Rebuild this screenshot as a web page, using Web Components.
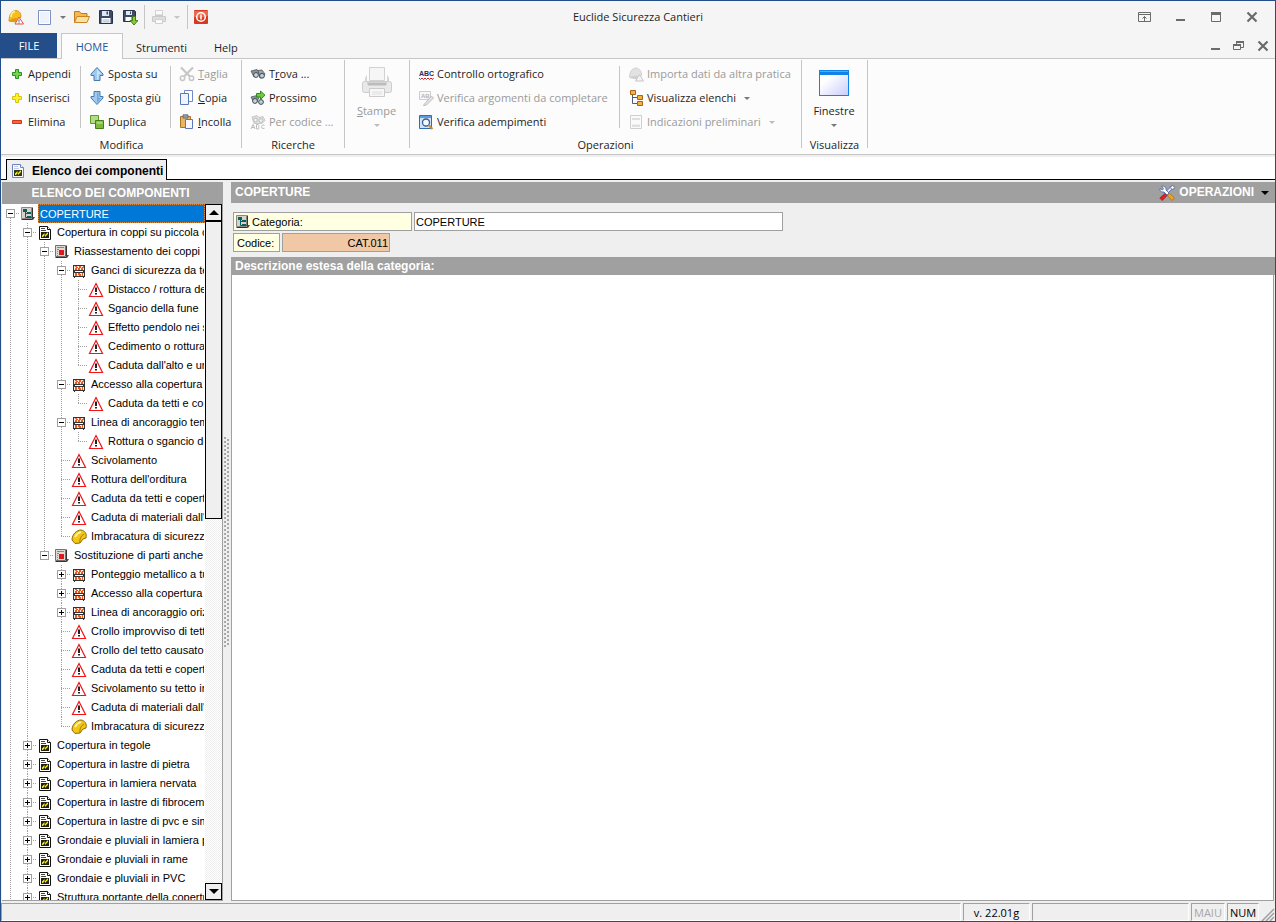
<!DOCTYPE html>
<html lang="it">
<head>
<meta charset="utf-8">
<title>Euclide Sicurezza Cantieri</title>
<style>
  html, body { margin: 0; height: 100%; }
  body { font: 11px/16px "Open Sans", "Noto Sans", sans-serif; color: #1e1e1e; background: #efefef; }
</style>
</head>
<body>
<ec-window>
  <ec-titlebar slot="title">Euclide Sicurezza Cantieri</ec-titlebar>
  <ec-tabbar slot="title"></ec-tabbar>
  <ec-ribbon slot="ribbon">
    <ec-group label="Modifica">
      <ec-column style="--w:80px">
        <ec-command icon="plus">Appendi</ec-command>
        <ec-command icon="plusy">Inserisci</ec-command>
        <ec-command icon="minus">Elimina</ec-command>
      </ec-column>
      <ec-column style="--w:90px">
        <ec-command icon="up">Sposta su</ec-command>
        <ec-command icon="down">Sposta giù</ec-command>
        <ec-command icon="dup">Duplica</ec-command>
      </ec-column>
      <ec-column style="--w:71px">
        <ec-command icon="cut" disabled><u>T</u>aglia</ec-command>
        <ec-command icon="copy"><u>C</u>opia</ec-command>
        <ec-command icon="paste"><u>I</u>ncolla</ec-command>
      </ec-column>
    </ec-group>
    <ec-group label="Ricerche">
      <ec-column style="--w:102px">
        <ec-command icon="find">T<u>r</u>ova ...</ec-command>
        <ec-command icon="next">Prossimo</ec-command>
        <ec-command icon="code" disabled>Per codice ...</ec-command>
      </ec-column>
    </ec-group>
    <ec-group label="">
      <ec-column style="--w:64px">
        <ec-command big arrow icon="printer" disabled><u>S</u>tampe</ec-command>
      </ec-column>
    </ec-group>
    <ec-group label="Operazioni">
      <ec-column style="--w:210px">
        <ec-command icon="abc">Controllo ortografico</ec-command>
        <ec-command icon="abedit" disabled>Verifica argomenti da completare</ec-command>
        <ec-command icon="check">Verifica adempimenti</ec-command>
      </ec-column>
      <ec-column style="--w:181px">
        <ec-command icon="helmetgray" disabled>Importa dati da altra pratica</ec-command>
        <ec-command icon="tree" arrow>Visualizza elenchi</ec-command>
        <ec-command icon="page" arrow disabled>Indicazioni preliminari</ec-command>
      </ec-column>
    </ec-group>
    <ec-group label="Visualizza">
      <ec-column style="--w:65px">
        <ec-command big arrow icon="window">Finestre</ec-command>
      </ec-column>
    </ec-group>
  </ec-ribbon>
  <ec-doctabs slot="tabs">Elenco dei componenti</ec-doctabs>

  <ec-tree slot="side" heading="ELENCO DEI COMPONENTI">
    <ec-node more selected open icon="cat" label="COPERTURE">
      <ec-node open icon="doc" label="Copertura in coppi su piccola o">
        <ec-node open icon="job" label="Riassestamento dei coppi">
          <ec-node open icon="barrier" label="Ganci di sicurezza da te">
            <ec-node icon="risk" label="Distacco / rottura de"></ec-node>
            <ec-node icon="risk" label="Sgancio della fune"></ec-node>
            <ec-node icon="risk" label="Effetto pendolo nei s"></ec-node>
            <ec-node icon="risk" label="Cedimento o rottura"></ec-node>
            <ec-node icon="risk" label="Caduta dall'alto e url"></ec-node>
          </ec-node>
          <ec-node open icon="barrier" label="Accesso alla copertura">
            <ec-node icon="risk" label="Caduta da tetti e cop"></ec-node>
          </ec-node>
          <ec-node open icon="barrier" label="Linea di ancoraggio tem">
            <ec-node icon="risk" label="Rottura o sgancio de"></ec-node>
          </ec-node>
          <ec-node icon="risk" label="Scivolamento"></ec-node>
          <ec-node icon="risk" label="Rottura dell'orditura"></ec-node>
          <ec-node icon="risk" label="Caduta da tetti e copert"></ec-node>
          <ec-node icon="risk" label="Caduta di materiali dall'a"></ec-node>
          <ec-node icon="helmet" label="Imbracatura di sicurezza"></ec-node>
        </ec-node>
        <ec-node open icon="job" label="Sostituzione di parti anche c">
          <ec-node closed icon="barrier" label="Ponteggio metallico a tu"></ec-node>
          <ec-node closed icon="barrier" label="Accesso alla copertura"></ec-node>
          <ec-node closed icon="barrier" label="Linea di ancoraggio oriz"></ec-node>
          <ec-node icon="risk" label="Crollo improvviso di tetti"></ec-node>
          <ec-node icon="risk" label="Crollo del tetto causato"></ec-node>
          <ec-node icon="risk" label="Caduta da tetti e copert"></ec-node>
          <ec-node icon="risk" label="Scivolamento su tetto in"></ec-node>
          <ec-node icon="risk" label="Caduta di materiali dall'a"></ec-node>
          <ec-node icon="helmet" label="Imbracatura di sicurezza"></ec-node>
        </ec-node>
      </ec-node>
      <ec-node closed icon="doc" label="Copertura in tegole"></ec-node>
      <ec-node closed icon="doc" label="Copertura in lastre di pietra"></ec-node>
      <ec-node closed icon="doc" label="Copertura in lamiera nervata"></ec-node>
      <ec-node closed icon="doc" label="Copertura in lastre di fibroceme"></ec-node>
      <ec-node closed icon="doc" label="Copertura in lastre di pvc e simi"></ec-node>
      <ec-node closed icon="doc" label="Grondaie e pluviali in lamiera pr"></ec-node>
      <ec-node closed icon="doc" label="Grondaie e pluviali in rame"></ec-node>
      <ec-node closed icon="doc" label="Grondaie e pluviali in PVC"></ec-node>
      <ec-node closed more icon="doc" label="Struttura portante della copertu"></ec-node>
    </ec-node>
  </ec-tree>
  <ec-detail slot="main" heading="COPERTURE"></ec-detail>
  <ec-status slot="status"></ec-status>
</ec-window>

<script>
const ICONS = {
  app: `<path d="M1 12C1 5 4 2 8 1.500C12 2 13 5 13 8L8 13Z" fill="#f6bf1c" stroke="#cf8a10" stroke-width=".8"/><path d="M3 8C3 5 5 3 7 2.500" stroke="#fff3a0" stroke-width="1.500" fill="none"/><path d="M1 12.500C4 9 7 9 9 9L8 13Z" fill="#e39a12"/><path d="M11 8L15.500 15H7Z" fill="#fff" stroke="#d9534a"/><path d="M11 10.500v2.300M11 13.500v1" stroke="#555"/>`,
  blank: `<path d="M1.500 1.500h12v14h-12z" fill="#fff" stroke="#7d90c4"/><path d="M3 3h9v11H3z" fill="#eef2fd"/>`,
  folder: `<path d="M.5 13.500v-11h5l1.500 2h6v3" fill="#f5b94e" stroke="#c27a1c"/><path d="M.5 13.500L3 7.500h12.500L13 13.500Z" fill="#fbe1a0" stroke="#c98425"/>`,
  save: `<path d="M1.500 1.500h12l1 1v12h-13z" fill="#3c4c66" stroke="#26334a"/><path d="M4 2h7v5H4z" fill="#dfe8f4"/><path d="M8.500 2.500h1.500v3H8.500z" fill="#3c4c66"/><path d="M3.500 9h9v5h-9z" fill="#fff"/><path d="M4.500 11h7M4.500 12.900h7" stroke="#9fb4d0"/>`,
  saveas: `<path d="M1.500 1.500h11l1 1v10h-12z" fill="#3c4c66" stroke="#26334a"/><path d="M4 2h6v4H4z" fill="#dfe8f4"/><path d="M8 2.500h1v2.500H8z" fill="#3c4c66"/><path d="M3.500 8h6v4h-6z" fill="#fff"/><path d="M10.500 7.500h3v4h2.500l-4 4.500-4-4.500h2.500z" fill="#8cc63e" stroke="#3f7a12" stroke-width=".9"/>`,
  print: `<path d="M4.500 1.500h7v6h-7z" fill="#fafafa" stroke="#d3d3d3"/><path d="M1.500 7.500h13v5h-13z" fill="#dedede" stroke="#cacaca"/><path d="M4 5.500h8v2.500H4z" fill="#cbcbcb"/><path d="M4.500 10.500h7v4h-7z" fill="#fbfbfb" stroke="#cfcfcf"/>`,
  power: `<rect x="0" y="1" width="14" height="14" rx="1" fill="#d9391e"/><path d="M0 2h14v5q-7 3-14 1z" fill="#ea6a4c"/><circle cx="7" cy="8" r="4.300" fill="none" stroke="#fff" stroke-width="1.500"/><path d="M7 5.500v5" stroke="#fff" stroke-width="1.500"/>`,
  plus: `<path d="M6.500 3.500h3v3h3v3h-3v3h-3v-3h-3v-3h3z" fill="#74d353" stroke="#27921c"/>`,
  plusy: `<path d="M6.500 3.500h3v3h3v3h-3v3h-3v-3h-3v-3h3z" fill="#fbf12c" stroke="#d8c40a"/>`,
  minus: `<path d="M3.500 6.500h9v3h-9z" fill="#f8653c" stroke="#d3341a"/>`,
  up: `<path d="M8 1.500L14 8v1.500h-3v5H5v-5H2V8Z" fill="#9fcaf0" stroke="#4a79ad"/><path d="M8 3L12 8H9.500v5.500H8z" fill="#c9e4fb"/>`,
  down: `<path d="M8 14.500L14 8V6.500h-3v-5H5v5H2V8Z" fill="#9fcaf0" stroke="#4a79ad"/><path d="M8 13L12 8H9.500V2.500H8z" fill="#6fa9dd"/>`,
  dup: `<path d="M1.500 1.500h8v8h-8z" fill="#b3dc86" stroke="#5c9a2c"/><path d="M6.500 6.500h8v8h-8z" fill="#7bb83c" stroke="#437f17"/><path d="M7.500 7.500h6v2.500h-6z" fill="#a7d66c"/>`,
  cut: `<path d="M2 1.500L11 10.500M14 1.500L5 10.500" stroke="#c6c6c6" stroke-width="2.200"/><circle cx="3.500" cy="12.300" r="2.200" fill="none" stroke="#c6c6c6" stroke-width="1.500"/><circle cx="12.500" cy="12.300" r="2.200" fill="none" stroke="#c6c6c6" stroke-width="1.500"/>`,
  copy: `<path d="M5.500 .5h8v11h-8z" fill="#fff" stroke="#6f8ac4"/><path d="M1.500 3.500h8v11h-8z" fill="#f0f4ff" stroke="#5c78b8"/>`,
  paste: `<path d="M1.500 2.500h10v11h-10z" fill="#e7b568" stroke="#a8742a"/><path d="M4 .8h5v3.200H4z" fill="#8f9fb5" stroke="#56657c" stroke-width=".8"/><path d="M6.500 5.500h7v9h-7z" fill="#f4f7ff" stroke="#5c78b8"/>`,
  find: `<path d="M1 5l6-1.500 2 2-2 4-3 1.500Z" fill="#8b9297" stroke="#4f565c" stroke-width=".8"/><path d="M8 4.500l4-.5 3 4-2 3.500-3 .5Z" fill="#9ca4aa" stroke="#4f565c" stroke-width=".8"/><circle cx="6" cy="9" r="2.400" fill="#c8d8e2" stroke="#40474d"/><circle cx="12" cy="9.800" r="2.400" fill="#b9d2e2" stroke="#40474d"/>`,
  next: `<path d="M1 7l6-1.500 2 2-2 4-3 1Z" fill="#8b9297" stroke="#4f565c" stroke-width=".8"/><circle cx="5" cy="11" r="2.400" fill="#c8d8e2" stroke="#40474d"/><circle cx="11" cy="12" r="2.400" fill="#b9d2e2" stroke="#40474d"/><path d="M6.500 3.500h4v-2.500l4.500 4.200-4.500 4.300V7h-4z" fill="#6ecb3f" stroke="#2a7d18" stroke-width=".9"/>`,
  code: `<path d="M2 3l5-1.500 2 2 4-1 2 4-3 3H4Z" fill="#dedede" stroke="#c9c9c9"/><circle cx="5.500" cy="6" r="1.800" fill="#f4f4f4" stroke="#bebebe"/><circle cx="11" cy="6.500" r="1.800" fill="#f4f4f4" stroke="#bebebe"/><path d="M1 15l2-4.500L5 15M1.800 13.500h2.600M6.500 10.500v4.500h2q1.200-1.100 0-2.300 1-1.100-.2-2.200zM14.500 11.200q-2.500-1.200-3 1.500 .2 2.800 3 1.600" stroke="#bdbdbd" fill="none"/>`,
  abc: `<text x="1" y="10" font-family="Liberation Sans" font-size="7" font-weight="700" fill="#25305f">ABC</text><path d="M1 12l1.500 1.500L4 12l1.500 1.500L7 12l1.500 1.500L10 12l1.500 1.500L13 12l1.500 1.500L15.500 12" stroke="#d0202a" fill="none"/>`,
  abedit: `<path d="M1.500 1.500h11v8h-11z" fill="#f7f7f7" stroke="#cecece"/><text x="3" y="8" font-family="Liberation Sans" font-size="6" font-weight="700" fill="#b5b5b5">AB</text><path d="M6 14.500L13.500 6l2 2-7 7-3 .5z" fill="#e3e3e3" stroke="#bdbdbd"/>`,
  check: `<path d="M1.500 1.500h12v13h-12z" fill="#cfe3fa" stroke="#2e6db4"/><path d="M2 2h11v2H2z" fill="#5e9be0"/><circle cx="8" cy="8.500" r="3.500" fill="#f2f9ff" stroke="#3c5d8f" stroke-width="1.300"/><path d="M10.500 11L14.500 15" stroke="#d08a2a" stroke-width="2"/>`,
  helmetgray: `<path d="M1.500 11C2 5 4 2.500 8 2c4 .5 5.500 4 5.500 7l-3 3z" fill="#e2e2e2" stroke="#d0d0d0"/><path d="M1 12q5-3 9-2l-1 3.500z" fill="#cfcfcf"/><path d="M11.500 8.500l4 6.500h-8z" fill="#f3f3f3" stroke="#c6c6c6"/>`,
  tree: `<path d="M4.500 5v8.500H9M4.500 7.500H9" stroke="#4e5c74" fill="none"/><g fill="#f5b042" stroke="#a6631a"><path d="M2.500 .5h5v4h-5zM9.500 5.500h5v4h-5zM9.500 11.500h5v4h-5z"/></g>`,
  page: `<path d="M2.500 1.500h11v13h-11z" fill="#fafafa" stroke="#cfcfcf"/><path d="M4 4h8v2H4zM4 10.500h8v2.500H4z" fill="#dfdfdf"/>`,
  printer: `<path d="M8.500 1.500h15v13h-15z" fill="#f6f6f6" stroke="#d2d2d2"/><path d="M6 9v6h20V9l2 3v5H4v-5z" fill="#d5d5d5"/><rect x="1.500" y="15.500" width="29" height="11" rx="2" fill="#e9e9e9" stroke="#cdcdcd"/><path d="M6 16.500h20l-1 3H7z" fill="#bcbcbc"/><path d="M8.500 22.500h15v8h-15z" fill="#f7f7f7" stroke="#cbcbcb"/><path d="M11 26h10M11 28h10" stroke="#dedede"/>`,
  window: `<defs><linearGradient id="g" x1="0" y1="0" x2="1" y2="1"><stop offset=".3" stop-color="#fff"/><stop offset="1" stop-color="#c9ccfa"/></linearGradient></defs><rect x="1.500" y="4.500" width="29" height="25" fill="url(#g)" stroke="#0e84ea"/><path d="M1 4h30v5H1z" fill="#1083e8"/><path d="M2 5h28v1H2z" fill="#4bb1fb"/>`,
  cat: `<path d="M1.500 1.500h10v11h-10z" fill="#d6d2cc" stroke="#8a8784"/><path d="M1.500 13.500h11v-12" stroke="#333" fill="none"/><path d="M5.500 5v6.500H8M5.500 7.500H8" stroke="#07605e" fill="none"/><path d="M3 3h4v3H3zM7 6h4v2H7zM7 10h4v2H7z" fill="#07605e"/><path d="M11 11h4l-2 3z" fill="#444"/>`,
  doc: `<path d="M2.500 1.500h8l3 3v10h-11z" fill="#fff" stroke="#111"/><path d="M10.500 1.500v3h3" fill="#fff" stroke="#111"/><path d="M4 3.500h4M4 5.500h5" stroke="#444"/><path d="M4 7h8v6H4z" fill="#20200c"/><path d="M5 12v-1.500l2.500-2.500v2.500l3-3H11V9l-3 3V9.800L6 12z" fill="#f4ec1c"/>`,
  doctab: `<path d="M2.500 1.500h8l3 3v10h-11z" fill="#f6f9ff" stroke="#6d86be"/><path d="M10.500 1.500v3h3" fill="#fff" stroke="#6d86be"/><path d="M4 3.500h4M4 5.500h5" stroke="#c0cce8"/><path d="M4 7h8v6H4z" fill="#33331a"/><path d="M5 12v-1.500l2.500-2.500v2.500l3-3H11V9l-3 3V9.800L6 12z" fill="#f4ec1c"/>`,
  job: `<path d="M1.500 1.500h10v11h-10z" fill="#dedad6" stroke="#77716e"/><path d="M1.500 13.500h11v-12" stroke="#333" fill="none"/><path d="M3 3.500h7M3 5.500h2M3 7.500h1M3 9.500h1M3 11.500h1" stroke="#8b8683"/><path d="M5 6h5v5H5z" fill="#e0181a"/><path d="M11 11h4l-2 3z" fill="#444"/>`,
  barrier: `<path d="M3.500 2v13M12.500 2v13" stroke="#333" stroke-width="1"/><path d="M3 2h10v5H3zM3 9h10v5H3z" fill="#fbeee6"/><path d="M2 2.500h12M2 7.500h12M2 9.500h12M2 13.500h12" stroke="#333"/><path d="M4 3h2v1h1v1H6v2H4V5h1V4H4zM8 3h2v2H9v2H7V5h1zM12 3h1v2h-1v2h-2V5h1V4h1zM4 10h2v3H4zM7 10h2v1h1v2H8v-1H7zM11 10h1v3h-1z" fill="#f0571c"/><path d="M2.500 2v12M13.500 2v12" stroke="#333"/>`,
  risk: `<path d="M8 1.500L14.500 14.500H1.500Z" fill="#fff" stroke="#f01518" stroke-width="1.200"/><path d="M8 5.500v4.500M8 11v1.500" stroke="#222" stroke-width="2"/>`,
  helmet: `<path d="M1 11C1 5 6 1 10 1c4 .5 6 4 5 8l-3 1-3 4-5 .5Z" fill="#f3c614" stroke="#8f6a08"/><path d="M4 8Q6 4 10 3" stroke="#fff7a8" stroke-width="1.800" fill="none"/><path d="M9 14q-1-6 4-9" stroke="#a87c08" fill="none"/>`,
  tools: `<path d="M12.500 1L14.500 3 7 9.500 5.500 8z" fill="#dfe6f6" stroke="#4a64a8" stroke-width=".8"/><circle cx="13.500" cy="2.500" r="1.800" fill="#fff" stroke="#4a64a8" stroke-width=".8"/><path d="M6 8.500L.8 13l2.400 2.600 5-5z" fill="#e32020" stroke="#8e1010" stroke-width=".6"/><path d="M2.500 1l2 2.500L3.500 5 1 3.500q-.5 4 4 3.500l3 3 2-2-3-3q.5-4-4.500-4z" fill="#fff" stroke="#4a64a8" stroke-width=".8"/><path d="M10.500 8.500L8.500 10.500l4.500 5 2.500-2.500z" fill="#f4a41c" stroke="#99600c" stroke-width=".6"/>`,
  pin: `<path d="M2.500 3.500h12v9h-12zM3 5.500h11" fill="none" stroke="#6b6b6b"/><path d="M8.500 12V7.500M6.500 9.500l2-2 2 2" fill="none" stroke="#6b6b6b"/>`,
  min: `<path d="M4 10h9v2H4z" fill="#6b6b6b"/>`,
  max: `<path d="M3.500 4.500h9v8h-9z" fill="none" stroke="#6b6b6b"/><path d="M3 3h10v3H3z" fill="#6b6b6b"/>`,
  restore: `<path d="M5.500 6V3.500h7v6H10" fill="none" stroke="#6b6b6b"/><path d="M5 3h8v2H5zM2 6h8v2H2z" fill="#6b6b6b"/><path d="M2.500 6.500h7v5h-7z" fill="none" stroke="#6b6b6b"/>`,
  close: `<path d="M3.500 3.500l9 9M12.500 3.500l-9 9" stroke="#6b6b6b" stroke-width="2.200"/>`
};

class Base extends HTMLElement {
  constructor() { super(); this.attachShadow({ mode: "open" }); }
  connectedCallback() { this.shadowRoot.innerHTML = this.view(); }
  at(name) { return this.getAttribute(name) || ""; }
}
const RESET = `*{box-sizing:border-box} button{font:inherit;color:inherit;background:none;border:0;padding:0;margin:0;white-space:nowrap}`;
const def = (name, view) => customElements.define(name, class extends Base { view() { return view(this); } });

def("ec-icon", el => {
  const n = el.at("name"), s = n === "printer" || n === "window" ? 32 : 16;
  return `<style>:host{display:block;flex:none;width:${s}px;height:${s}px}svg{display:block}</style>
    <svg width="${s}" height="${s}" viewBox="0 0 ${s} ${s}" aria-hidden="true">${ICONS[n]}</svg>`;
});

def("ec-window", () => `<style>
  *{box-sizing:border-box}
  :host{display:flex;flex-direction:column;box-sizing:border-box;height:100vh;border:1px solid #244e8a;background:#efefef;overflow:hidden}
  .work{display:flex;flex:1;min-height:0;padding:2px 0 2px 1px}
  .split{flex:none;width:8px;display:flex;flex-direction:column;justify-content:center}
  .grip{height:210px;width:5px;margin-left:1px;
    background:linear-gradient(#a8a8a8 50%,transparent 0) 0 0/2px 4px repeat-y,linear-gradient(transparent 50%,#a8a8a8 0) 3px 0/2px 4px repeat-y}
  </style>
  <header><slot name="title"></slot></header>
  <slot name="ribbon"></slot><slot name="tabs"></slot>
  <div class="work"><slot name="side"></slot><div class="split"><div class="grip"></div></div><slot name="main"></slot></div>
  <slot name="status"></slot>`);

def("ec-titlebar", () => `<style>${RESET}
  :host{display:grid;grid-template-columns:1fr auto 1fr;align-items:center;height:32px;background:#f5f5f5}
  .quick,.win{display:flex;align-items:center}
  .quick{padding-left:7px;gap:8px}
  .win{justify-content:flex-end;gap:20px;padding-right:15px}
  button{display:block}
  i{display:block;width:1px;height:24px;background:#c6c6c6}
  .drop{width:6px;height:3px;border:3px solid transparent;border-top-color:#777;border-bottom:0}
  .off{border-top-color:#c4c4c4;margin:0 1px}
  .new,.out{display:flex;align-items:center}
  .new{gap:7px;margin-left:5px}
  .out{gap:6px;margin-left:-2px}
  </style>
  <div class="quick">
    <button aria-label="Euclide"><ec-icon name="app"></ec-icon></button>
    <div class="new"><button aria-label="Nuovo"><ec-icon name="blank"></ec-icon></button><button class="drop" aria-label="Altri nuovi"></button></div>
    <button aria-label="Apri"><ec-icon name="folder"></ec-icon></button>
    <button aria-label="Salva"><ec-icon name="save"></ec-icon></button>
    <button aria-label="Salva con nome"><ec-icon name="saveas"></ec-icon></button>
    <div class="out"><i></i><button aria-label="Stampa" disabled><ec-icon name="print"></ec-icon></button><button class="drop off" aria-label="Altre stampe" disabled></button><i></i><button aria-label="Esci"><ec-icon name="power"></ec-icon></button></div>
  </div>
  <slot></slot>
  <div class="win">
    <button aria-label="Riduci barra multifunzione"><ec-icon name="pin"></ec-icon></button>
    <button aria-label="Riduci a icona"><ec-icon name="min"></ec-icon></button>
    <button aria-label="Ingrandisci"><ec-icon name="max"></ec-icon></button>
    <button aria-label="Chiudi"><ec-icon name="close"></ec-icon></button>
  </div>`);

def("ec-tabbar", () => `<style>${RESET}
  :host{display:flex;height:26px;background:linear-gradient(#c6c6c6,#c6c6c6) 0 100%/100% 1px no-repeat #f5f5f5}
  button{height:26px;line-height:26px;text-align:center}
  .file{width:56px;background:#244e8a;color:#fff;margin-right:4px;height:25px}
  .home{width:62px;border:1px solid #c6c6c6;border-bottom:0;background:#fcfcfc;color:#2b579a}
  .tab{padding:2px 14px 0 13px}
  .win{margin-left:auto;display:flex;align-items:center;gap:8px;padding-right:4px}
  .win button{height:16px}
  </style>
  <button class="file">FILE</button><button class="home">HOME</button><button class="tab">Strumenti</button><button class="tab">Help</button>
  <div class="win">
    <button aria-label="Riduci documento"><ec-icon name="min"></ec-icon></button>
    <button aria-label="Ripristina documento"><ec-icon name="restore"></ec-icon></button>
    <button aria-label="Chiudi documento"><ec-icon name="close"></ec-icon></button>
  </div>`);

def("ec-ribbon", () => `<style>
  :host{display:flex;box-sizing:border-box;height:96px;background:#fcfcfc;border-bottom:1px solid #c6c6c6}
  </style><slot></slot>`);

def("ec-group", el => `<style>
  :host{display:flex;flex-direction:column;padding-top:3px;height:94px;box-sizing:border-box;
    background:linear-gradient(#c6c6c6,#c6c6c6) 100% 1px/1px 88px no-repeat;padding-right:1px}
  :host(:first-child){padding-right:0}
  .cols{display:flex}
  .name{text-align:center;line-height:22px}
  </style><div class="cols"><slot></slot></div><div class="name">${el.at("label")}</div>`);

def("ec-column", () => `<style>
  :host{display:flex;flex-direction:column;box-sizing:border-box;width:var(--w);height:72px;padding-left:8px}
  :host(:not(:last-child)){background:linear-gradient(#c6c6c6,#c6c6c6) 100% 4px/1px 62px no-repeat}
  ::slotted([big]){margin-left:-9px}
  </style><slot></slot>`);

def("ec-command", el => {
  const off = el.hasAttribute("disabled");
  return `<style>${RESET}
  :host{display:block}
  button{display:flex;align-items:center;height:24px;gap:3px}
  :host([big]) button{flex-direction:column;width:100%;height:72px;padding-top:4px;gap:5px}
  button:disabled{color:#9a9a9a}
  .arrow{width:0;border:3px solid transparent;border-top-color:#777;border-bottom:0;margin-left:5px}
  :host([big]) .arrow{margin:0}
  :disabled .arrow{border-top-color:#bdbdbd}
  </style><button ${off ? "disabled" : ""}><ec-icon name="${el.at("icon")}"></ec-icon><span><slot></slot></span>${el.hasAttribute("arrow") ? `<span class="arrow"></span>` : ""}</button>`;
});

def("ec-doctabs", () => `<style>${RESET}
  :host{display:flex;height:25px;padding:4px 0 0 5px;box-sizing:border-box;
    background:linear-gradient(#000,#000) 0 100%/100% 1px no-repeat,linear-gradient(#efefef 2px,#fff 0);
    font:bold 12px/16px "Liberation Sans",Arial,sans-serif;color:#000}
  button{display:flex;align-items:center;gap:6px;border:1px solid #000;border-bottom:0;background:#efefef;padding:2px 3px 0;height:21px}
  </style><button><ec-icon name="doctab"></ec-icon><span><slot></slot></span></button>`);

def("ec-tree", el => `<style>${RESET}
  :host{display:flex;flex-direction:column;width:221px;flex:none;border-right:1px solid #a0a0a0;border-bottom:1px solid #a0a0a0;box-sizing:border-box;font:11px/16px "Liberation Sans",Arial,sans-serif;color:#000}
  h2{margin:0 -1px 0 0;height:22px;font-size:12px;line-height:22px;text-align:center;padding-right:4px;background:#a0a0a0;color:#fff}
  .body{display:flex;flex:1;min-height:0;background:#fff}
  .list{flex:1;min-width:0;overflow:hidden}
  .scroll{width:17px;display:flex;flex-direction:column;background:repeating-conic-gradient(#efefef 0 25%,#fff 0 50%) 0 0/2px 2px}
  .scroll button{height:17px;flex:none;border:1px solid #000;background:#efefef;display:grid;place-items:center}
  .tri{border:5px solid transparent;border-top:0;border-bottom-color:#000}
  .tri.dn{transform:rotate(180deg)}
  .track{flex:1}
  .thumb{height:45%;border:1px solid #000;background:#efefef}
  </style><h2>${el.at("heading")}</h2>
  <div class="body"><div class="list"><slot></slot></div>
  <div class="scroll"><button aria-label="Scorri su"><span class="tri"></span></button><div class="track"><div class="thumb"></div></div><button aria-label="Scorri giù"><span class="tri dn"></span></button></div></div>`);

def("ec-node", el => {
  const open = el.hasAttribute("open"), box = open || el.hasAttribute("closed");
  return `<style>${RESET}
  :host{display:block;background:repeating-linear-gradient(#a0a0a0 0 1px,transparent 0 2px) 8px 0/1px 100% no-repeat}
  :host(:last-child:not([more])){background-size:1px 10px}
  :host([selected]){background-position:8px 10px}
  .row{display:flex;height:19px;align-items:center;background:repeating-linear-gradient(90deg,#a0a0a0 0 1px,transparent 0 2px) 8px 9px/9px 1px no-repeat}
  .tog{width:18px;padding-left:4px;flex:none}
  .tog button{display:block;width:9px;height:9px;border:1px solid #a0a0a0;
    background:linear-gradient(#000,#000) 1px 3px/5px 1px no-repeat,${open ? "" : "linear-gradient(#000,#000) 3px 1px/1px 5px no-repeat,"}#fff}
  .text{flex:1;min-width:0;overflow:hidden;white-space:nowrap;height:19px;line-height:18px;margin:0 1px 0 2px;padding-left:2px}
  :host([selected]) .text{background:#0078d7;color:#fff;border:1px dotted #e08a3c;padding-left:1px;margin-right:0}
  .kids{padding-left:17px}
  </style><div class="row"><div class="tog">${box ? `<button aria-label="${open ? "Comprimi" : "Espandi"}"></button>` : ""}</div><ec-icon name="${el.at("icon")}"></ec-icon><div class="text">${el.at("label")}</div></div>
  <div class="kids"><slot></slot></div>`;
});

def("ec-detail", el => `<style>${RESET}
  :host{display:flex;flex-direction:column;flex:1;min-width:0;font:11px/16px "Liberation Sans",Arial,sans-serif;color:#000}
  h1,h2{margin:0;font-size:12px;background:#a0a0a0;color:#fff;padding-left:4px}
  .head{display:flex;justify-content:space-between;background:#a0a0a0;height:21px;color:#fff;font:bold 12px/21px "Liberation Sans",Arial,sans-serif}
  .head button{display:flex;align-items:center;gap:4px;padding-right:6px}
  .drop{border:4px solid transparent;border-top-color:#000;border-bottom:0;margin-left:3px}
  .form{padding:9px 2px 5px;display:grid;gap:2px}
  .line{display:flex;gap:2px}
  label{display:flex;align-items:center;gap:1px;height:19px;border:1px solid #a0a0a0;background:#ffffe1;padding:0 3px}
  .cat{width:179px;padding-left:1px}
  .cod{width:47px}
  input{font:inherit;color:inherit;height:19px;border:1px solid #a0a0a0;padding:0 1px;background:#fff;border-radius:0;margin:0}
  #cat{width:369px}
  #cod{width:108px;background:#f0c8a5;text-align:right}
  h2{height:18px;line-height:18px}
  textarea{flex:1;min-height:0;margin:0 1px 0 0;border:1px solid #a0a0a0;border-top:0;resize:none;background:#fff;font:inherit;border-radius:0}
  </style>
  <div class="head"><h1>${el.at("heading")}</h1><button><ec-icon name="tools"></ec-icon>OPERAZIONI<span class="drop"></span></button></div>
  <div class="form">
    <div class="line"><label class="cat" for="cat"><ec-icon name="cat"></ec-icon>Categoria:</label><input id="cat" value="COPERTURE"></div>
    <div class="line"><label class="cod" for="cod">Codice:</label><input id="cod" value="CAT.011"></div>
  </div>
  <h2 id="desc">Descrizione estesa della categoria:</h2>
  <textarea aria-labelledby="desc"></textarea>`);

def("ec-status", () => `<style>
  *{box-sizing:border-box}
  :host{display:flex;height:18px;gap:2px;color:#000;line-height:17px}
  div{border:1px solid #a0a0a0;border-right-color:#fff;border-bottom-color:#fff;text-align:center}
  .msg{flex:1}.ver{width:67px}.info{width:157px}.caps{width:34px;color:#a8a8a8}.num{width:32px}
  svg{width:14px;height:13px;align-self:flex-end;display:block}
  </style>
  <div class="msg"></div><div class="ver">v. 22.01g</div><div class="info"></div><div class="caps">MAIU</div><div class="num">NUM</div>
  <svg viewBox="0 0 14 13" aria-hidden="true"><path d="M1 13L13 1M5 13l8-8M9 13l4-4" stroke="#a0a0a0" stroke-width="1.500"/></svg>`);
</script>
</body>
</html>
